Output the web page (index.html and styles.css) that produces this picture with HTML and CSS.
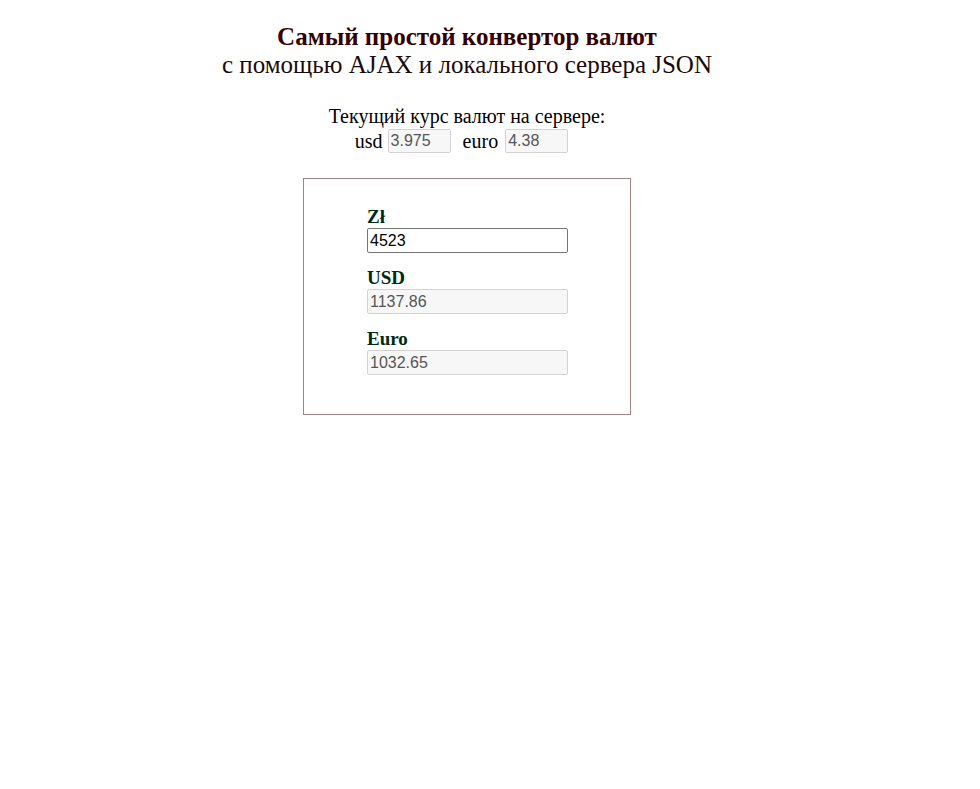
FILE: index.html
```html
<!DOCTYPE html>
<html lang="ru">
<head>
<meta charset="utf-8">
<title>Конвертор валют</title>
<link rel="stylesheet" href="styles.css">
</head>
<body>
<div class="page">
  <header class="head">
    <h1 class="title">Самый простой конвертор валют</h1>
    <p class="subtitle">с помощью AJAX и локального сервера JSON</p>
  </header>
  <section class="rates">
    <div class="rates-caption">Текущий курс валют на сервере:</div>
    <div class="rates-row">
      <label class="rate">usd <input class="field field-rate" type="text" value="3.975" disabled></label>
      <label class="rate rate-euro">euro <input class="field field-rate" type="text" value="4.38" disabled></label>
    </div>
  </section>
  <section class="box">
    <div class="group">
      <div class="label">Zł</div>
      <input class="field field-main" type="text" value="4523">
    </div>
    <div class="group">
      <div class="label">USD</div>
      <input class="field field-main" type="text" value="1137.86" disabled>
    </div>
    <div class="group">
      <div class="label">Euro</div>
      <input class="field field-main" type="text" value="1032.65" disabled>
    </div>
  </section>
</div>
</body>
</html>
```

FILE: styles.css
```css
html, body {
  background: #ffffff;
}
body {
  margin: 8px;
  font-family: "Liberation Serif", "Times New Roman", serif;
  color: #000;
}
.page {
  width: 918px;
  display: flex;
  flex-direction: column;
  align-items: center;
}
.head {
  margin-top: 15px;
  text-align: center;
  color: #330000;
}
.title {
  margin: 0;
  font-size: 25px;
  line-height: 28px;
  font-weight: bold;
}
.subtitle {
  margin: 0;
  font-size: 25px;
  line-height: 28px;
  color: #1a0a0a;
}
.rates {
  margin-top: 26px;
  text-align: center;
  font-size: 20px;
}
.rates-caption {
  line-height: 22px;
}
.rates-row {
  display: flex;
  justify-content: center;
  gap: 12px;
  margin-top: 2px;
  margin-right: 11px;
}
.rate {
  display: flex;
  align-items: center;
  gap: 5px;
}
.rate-euro {
  gap: 7px;
}
.field {
  box-sizing: border-box;
  font-family: "Liberation Sans", Arial, sans-serif;
  font-size: 16px;
  height: 25px;
  padding: 1px 2px;
  border: 1px solid #767676;
  border-radius: 2px;
  background: #fff;
  color: #000;
  outline: none;
}
.field:disabled {
  background: #f7f7f7;
  border-color: #d3d3d3;
  color: #555;
}
.field-rate {
  width: 63px;
  height: 24px;
}
.box {
  margin-top: 25px;
  box-sizing: border-box;
  width: 328px;
  border: 1px solid #a08585;
  padding: 27px 62px 39px 63px;
  display: flex;
  flex-direction: column;
  gap: 14px;
}
.label {
  font-weight: bold;
  font-size: 19px;
  line-height: 22px;
  color: #002a11;
}
.field-main {
  width: 201px;
  display: block;
}
```
